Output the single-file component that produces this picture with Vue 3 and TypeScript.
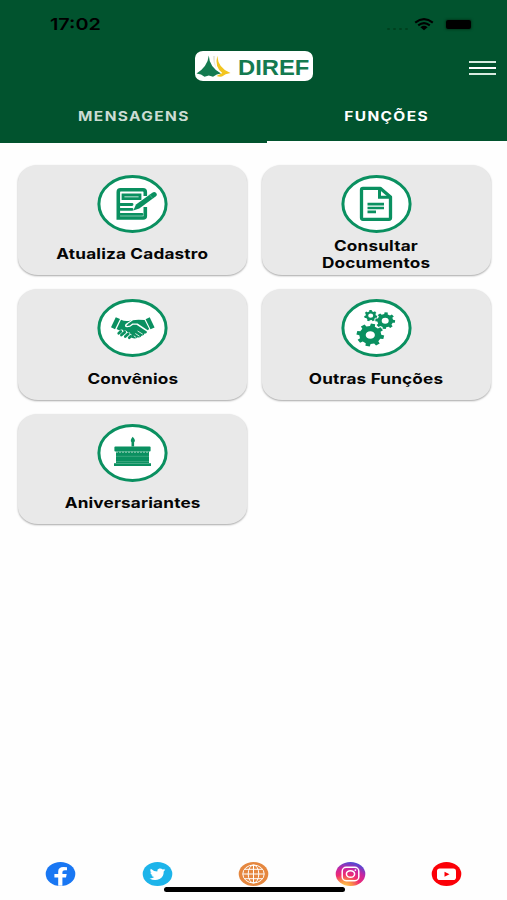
<script setup lang="ts">
type IconName = 'edit' | 'doc' | 'hands' | 'gears' | 'cake'

interface Tile {
  icon: IconName
  lines: string[]
}

const tiles: Tile[] = [
  { icon: 'edit', lines: ['Atualiza Cadastro'] },
  { icon: 'doc', lines: ['Consultar', 'Documentos'] },
  { icon: 'hands', lines: ['Convênios'] },
  { icon: 'gears', lines: ['Outras Funções'] },
  { icon: 'cake', lines: ['Aniversariantes'] },
]

// Closed outline of a cog with a round hole, stretched to its own x and y radii.
function cog(cx: number, cy: number, rx: number, ry: number, hole: number, teeth: number, turn = 0): string {
  const step = (Math.PI * 2) / teeth
  const pts: string[] = []
  const add = (angle: number, r: number) =>
    pts.push(`${(cx + Math.cos(angle) * rx * r).toFixed(2)} ${(cy + Math.sin(angle) * ry * r).toFixed(2)}`)
  for (let i = 0; i < teeth; i++) {
    const a = i * step + turn
    add(a - step * 0.29, 0.79)
    add(a - step * 0.2, 1)
    add(a + step * 0.2, 1)
    add(a + step * 0.29, 0.79)
  }
  const hx = rx * hole
  const hy = ry * hole
  return `M${pts.join('L')}Z M${cx - hx} ${cy}a${hx} ${hy} 0 1 0 ${hx * 2} 0a${hx} ${hy} 0 1 0 ${-hx * 2} 0Z`
}

const cogs = [
  cog(29.3, 36, 13.9, 11.5, 0.33, 8, 0.2),
  cog(44.2, 21.7, 10, 8.4, 0.35, 8, 0.1),
  cog(29.7, 16.7, 6.6, 5.7, 0.38, 7, 0.2),
]
</script>

<template>
  <div class="screen">
    <header class="header">
      <div class="status">
        <span class="clock">17:02</span>
        <div class="signals">
          <i class="cell"></i><i class="cell"></i><i class="cell"></i><i class="cell"></i>
          <svg class="wifi" width="20" height="13" viewBox="0 0 20 13">
            <path d="M1.2 4.6Q10-2.3 18.8 4.6M4.2 7.4Q10 2.8 15.8 7.4" fill="none" stroke="#000" stroke-width="2.1" />
            <path d="M6.4 9.3Q10 6.4 13.6 9.3L10 12.3Z" fill="#000" />
          </svg>
          <span class="battery"></span>
        </div>
      </div>
      <div class="bar">
        <div class="logo">
          <svg width="36" height="24" viewBox="0 0 36 24">
            <path d="M13.8 1.5Q14.3 13 26 19.5Q21.5 20 18 22.8L13.8 21.4L9.5 22.8Q6.5 20 1.5 19.5Q12.7 12.5 13.8 1.5Z" fill="#147a50" />
            <path d="M22.3 1.8Q23.1 14.5 35.5 19Q30 19.8 27 22.6Q24.1 23 21.5 22L27.3 19Q19.3 13 22.3 1.8Z" fill="#f3c51f" />
            <path d="M18 2Q17.7 9 21 13.5Q19.5 8 20.1 2Z" fill="#e9e9df" />
          </svg>
          <span class="brand">DIREF</span>
        </div>
        <button class="menu" aria-label="Menu"><i></i><i></i><i></i></button>
      </div>
      <nav class="tabs">
        <div class="tab"><span class="tab-text">MENSAGENS</span></div>
        <div class="tab active"><span class="tab-text">FUNÇÕES</span></div>
      </nav>
    </header>

    <main class="grid">
      <section v-for="tile in tiles" :key="tile.icon" class="card">
        <svg class="icon" width="71" height="58" viewBox="0 0 71 58">
          <ellipse cx="35.5" cy="29" rx="33.6" ry="27.5" fill="#fff" stroke="#0a9060" stroke-width="3" />
          <g v-if="tile.icon === 'edit'" fill="none" stroke="#0a9060">
            <path d="M48.3 21V17Q48.3 14.8 46 14.8H23.5Q21.3 14.8 21.3 17V43H46.1Q48.3 43 48.3 41V32" stroke-width="3.6" />
            <path d="M26 20H43V23.6H26Z" stroke-width="2.8" />
            <path d="M23.5 29.5H35M23.5 34.4H35M23.5 39.4H45" stroke-width="2.9" stroke-linecap="round" />
            <path d="M39 33L57 19.8" stroke="#fff" stroke-width="6.6" />
            <path d="M36.3 35.6L39 29.4L55.3 17.7Q57.4 16.2 59.2 18Q60.7 20 58.6 21.6L42.3 33.4Z" fill="#0a9060" stroke="none" />
            <path d="M52.2 19.3L55.7 23.5" stroke="#74bf9f" stroke-width=".6" />
          </g>
          <g v-else-if="tile.icon === 'doc'" fill="none" stroke="#0a9060">
            <path d="M22 13.3H39.2L49.5 22V42.8Q49.5 44.3 48 44.3H22Q20.5 44.3 20.5 42.8V14.8Q20.5 13.3 22 13.3Z" stroke-width="3.3" stroke-linejoin="round" />
            <path d="M38.5 14V22.3H49" stroke-width="3" />
            <path d="M26.5 29.1H43M26.5 33H43M26.5 36.9H35" stroke-width="2.7" />
          </g>
          <g v-else-if="tile.icon === 'hands'" fill="#0a9060">
            <path d="M18.8 18.2L23 19.9L18 30.2L14 28.2Z M52.7 18.2L57.6 28.5L53.5 30.2L48.6 20.2Z" />
            <path d="M24 20.8Q29 23.2 34.3 21.2L28.6 25Q26.8 27.8 30 28.3Q33 28.4 36 25.7H39.5L49.8 32.4Q50.4 34.3 47.5 34.6Q47.3 36.8 44.5 36.7Q43.6 39 40.7 38.2Q38.6 40.3 35.2 39.1L34 38.2Q36.3 35.8 33.3 35.1Q33.5 32.9 30.3 33Q29.6 30.7 26.6 31.9Q24.8 29.5 22.5 31.6L19.6 30.1Z" />
            <path d="M36 21.2Q40.5 20.2 47.6 21.1L52.2 30L50.7 31.2L40.6 24.5H35.3Q32.6 27.5 29.3 27L31 24.8Z" />
            <path d="M23.8 32.4L21.7 34.3M27.8 33.1L24.4 36M31.3 34.8L28.3 37.5M33.8 37.2L32.2 38.7" stroke="#0a9060" stroke-width="2.7" stroke-linecap="round" />
            <path d="M40.6 32L45.8 35.2M38.3 34.5L42.5 37.2M36.8 36.8L39.2 38.5" stroke="#fff" stroke-width=".8" />
          </g>
          <g v-else-if="tile.icon === 'gears'" fill="#0a9060" fill-rule="evenodd">
            <path v-for="d in cogs" :key="d" :d="d" />
          </g>
          <g v-else fill="#0a9060">
            <path d="M35.7 12.7Q39.3 16.2 37.1 18.2V22.6H34.5V18.2Q32.6 16.3 35.7 12.7Z" />
            <rect x="17.4" y="22.4" width="36.2" height="5.2" rx="1" />
            <path d="M19 27.5H52V39H19Z M17 39.3H54V41.9H17Z" />
            <path d="M19 28.2H52" stroke="#93ceb6" stroke-width="1" stroke-dasharray="2 1" />
            <path d="M19 32.3H52M19 37.6H52" stroke="#4fb08c" stroke-width=".7" />
          </g>
        </svg>
        <div class="label">
          <span v-for="line in tile.lines" :key="line">{{ line }}</span>
        </div>
      </section>
    </main>

    <footer class="footer">
      <svg class="social" viewBox="0 0 30 24">
        <ellipse cx="15" cy="12" rx="14.8" ry="12" fill="#1977f3" />
        <path d="M12.7 23.8V15.4H8.9V12H12.7V9.5Q12.7 4.9 18 4.9Q20 4.9 21.5 5.2V8.2H19.3Q16.9 8.2 16.9 10V12H21.2L20.5 15.4H16.9V23.8Z" fill="#fff" />
      </svg>
      <svg class="social" viewBox="0 0 30 24">
        <ellipse cx="15" cy="12" rx="14.8" ry="12" fill="#1db4ea" />
        <path d="M22.8 7.6Q21.9 8 21 8.1Q22 7.6 22.3 6.7Q21.3 7.2 20.2 7.4Q18.8 6.1 16.8 6.5Q14.4 7.2 14.8 9.6Q11 9.3 8.3 6.7Q7 9.1 9.2 10.8L7.8 10.4Q7.9 12.4 10.3 13.2L8.9 13.3Q9.6 14.9 11.8 15.1Q9.8 16.6 7 16.4Q12 19.2 17 17Q21.4 14.7 21.2 9.4Q22.2 8.7 22.8 7.6Z" fill="#fff" />
      </svg>
      <svg class="social" viewBox="0 0 30 24">
        <ellipse cx="15" cy="12" rx="14.8" ry="12" fill="#e5873f" />
        <g fill="none" stroke="#fff" stroke-width="1">
          <ellipse cx="15" cy="12" rx="10.7" ry="9" />
          <ellipse cx="15" cy="12" rx="5.3" ry="9" />
          <path d="M15 3V21M4.3 12H25.7M6.3 7.3H23.7M6.3 16.7H23.7" />
        </g>
      </svg>
      <svg class="social" viewBox="0 0 30 24">
        <defs>
          <radialGradient id="insta" cx=".3" cy="1.05" r="1.05">
            <stop offset="0" stop-color="#ffd957" />
            <stop offset=".25" stop-color="#fb9245" />
            <stop offset=".5" stop-color="#ef2c70" />
            <stop offset=".75" stop-color="#ca25a0" />
            <stop offset="1" stop-color="#5546d2" />
          </radialGradient>
        </defs>
        <ellipse cx="15" cy="12" rx="14.8" ry="12" fill="url(#insta)" />
        <g fill="none" stroke="#fff" stroke-width="1.5">
          <rect x="6.7" y="5.3" width="16.6" height="13.4" rx="4" />
          <ellipse cx="15" cy="12" rx="4.1" ry="3.3" />
        </g>
        <circle cx="19.9" cy="8.1" r=".9" fill="#fff" />
      </svg>
      <svg class="social" viewBox="0 0 30 24">
        <ellipse cx="15" cy="12" rx="14.8" ry="12" fill="#fb0007" />
        <rect x="5.5" y="6.5" width="19" height="11.5" rx="2.8" fill="#fff" />
        <path d="M13 9.7L18 12.2L13 14.8Z" fill="#fb0007" />
      </svg>
      <div class="home"></div>
    </footer>
  </div>
</template>

<style>
body {
  margin: 0;
  background: #fff;
}
</style>

<style scoped>
.screen {
  width: 507px;
  height: 900px;
  display: flex;
  flex-direction: column;
  background: #fefefe;
  font-family: Inter, 'Liberation Sans', sans-serif;
  overflow: hidden;
}
.header {
  height: 143px;
  flex: none;
  display: flex;
  flex-direction: column;
  background: #01532e;
}
.status {
  height: 48px;
  display: flex;
  justify-content: space-between;
  padding: 0 33px 0 50px;
}
.clock {
  margin-top: 14px;
  height: 21px;
  font-size: 16.5px;
  line-height: 21px;
  font-weight: 600;
  color: #000;
  transform: scaleX(1.2);
  transform-origin: left;
}
.signals {
  height: 13px;
  margin-top: 18px;
  display: flex;
  align-items: center;
}
.cell {
  width: 3px;
  height: 2px;
  margin: 9px 3px 0 0;
  border-radius: 1px;
  background: #00401f;
}
.wifi {
  margin: 0 12px 0 3px;
}
.battery {
  width: 25px;
  height: 9px;
  margin-right: 3px;
  border-radius: 2px;
  background: #000;
  box-shadow: 0 0 2px 1px #003b1e;
}
.bar {
  height: 44px;
  display: flex;
  justify-content: space-between;
  padding: 3px 11px 0 195px;
}
.logo {
  width: 118px;
  height: 30px;
  box-sizing: border-box;
  display: flex;
  align-items: center;
  border-radius: 8px / 7px;
  background: #fff;
}
.brand {
  margin-left: 6.5px;
  padding-top: 4px;
  font: bold 22px/26px 'Liberation Sans', Arial, sans-serif;
  color: #147a50;
  transform: scaleX(1.08);
  transform-origin: left;
}
.menu {
  width: 27px;
  height: 14px;
  margin-top: 10px;
  padding: 0;
  border: 0;
  background: none;
  display: flex;
  flex-direction: column;
  justify-content: space-between;
}
.menu i {
  height: 2px;
  background: #d7ebdf;
}
.menu i:nth-child(2) {
  background: #fff;
}
.tabs {
  flex: 1;
  display: flex;
}
.tab {
  box-sizing: border-box;
  width: 267px;
  padding-top: 12px;
  display: flex;
  justify-content: center;
  color: #ccdcd3;
}
.tab.active {
  width: 240px;
  color: #fff;
  border-bottom: 2px solid #fff;
}
.tab-text {
  height: 18px;
  font-size: 13px;
  line-height: 18px;
  font-weight: 650;
  letter-spacing: 1.15px;
  transform: scaleX(1.19);
}
.grid {
  flex: 1;
  display: grid;
  grid-template-columns: 229px 229px;
  grid-auto-rows: 110.3px;
  gap: 14px 14.5px;
  align-content: start;
  padding: 22px 0 0 18px;
}
.card {
  display: flex;
  flex-direction: column;
  align-items: center;
  padding-top: 10px;
  box-sizing: border-box;
  border-radius: 20px / 17px;
  background: #e9e9e9;
  box-shadow: 0 1px 2px rgba(0, 0, 0, 0.34);
}
.icon {
  flex: none;
}
.label {
  height: 42px;
  display: flex;
  flex-direction: column;
  align-items: center;
  justify-content: center;
}
.label span {
  font-size: 14.3px;
  line-height: 17.5px;
  font-weight: 700;
  letter-spacing: 0.15px;
  color: #050505;
  white-space: nowrap;
  transform: scaleX(1.2);
}
.footer {
  position: relative;
  height: 38px;
  display: flex;
  justify-content: space-between;
  padding: 0 45px;
}
.social {
  width: 31px;
  height: 24px;
}
.home {
  position: absolute;
  left: 163.5px;
  top: 25px;
  width: 181px;
  height: 5px;
  border-radius: 3px;
  background: #000;
}
</style>
